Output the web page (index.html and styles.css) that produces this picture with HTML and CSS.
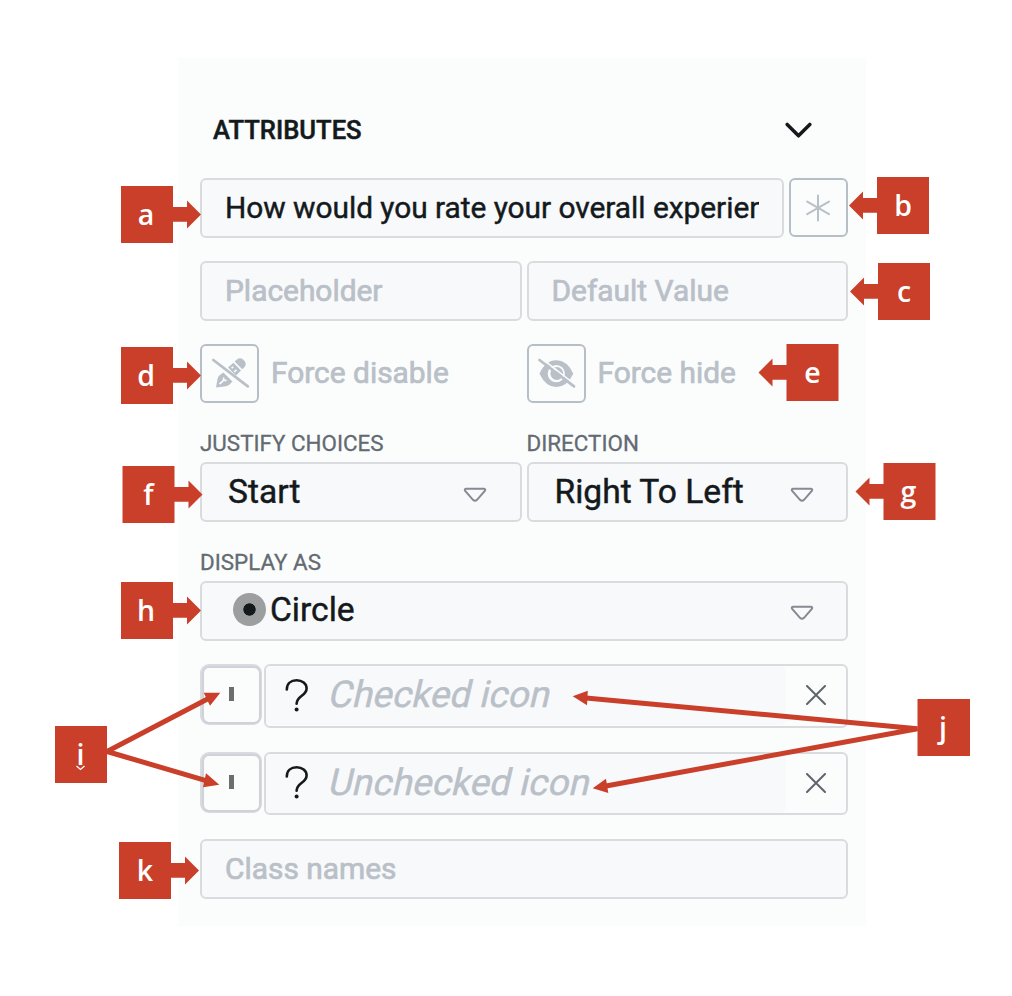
FILE: index.html
```html
<!DOCTYPE html>
<html lang="en">
<head>
<meta charset="utf-8">
<title>Attributes</title>
<link rel="stylesheet" href="styles.css">
</head>
<body>
<main class="panel">
  <header class="panel-head">
    <h1 class="title">ATTRIBUTES</h1>
    <svg class="chevron" width="28" height="18" viewBox="0 0 28 18"><path d="M2.2 3.4 13.5 14.8 24.8 3.4"/></svg>
  </header>

  <div class="row row-label">
    <div class="field grow"><span class="clip value">How would you rate your overall experience?</span></div>
    <button class="icon-btn"><svg width="59" height="60" viewBox="0 0 59 60"><path class="thin" d="M29 17.5v25M18.2 23.6l21.8 12.6M40 23.6 18.2 36.2"/></svg></button>
  </div>

  <div class="row row-pair">
    <div class="field half"><span class="hint">Placeholder</span></div>
    <div class="field half"><span class="hint">Default Value</span></div>
  </div>

  <div class="row row-toggles">
    <div class="toggle half">
      <button class="icon-btn"><svg width="59" height="59" viewBox="0 0 59 59">
        <path class="solid" d="M16 43.6 17.6 34.5Q18.2 31.8 20.2 30.8L23.4 28.6 32.4 37.6 29.6 40.4Q28.2 41.7 26 42.2Z"/>
        <path class="cut" d="M19.5 40.2 23.2 36.6M23.6 33.6V36.4H26.6"/>
        <path class="solid" d="M28 23.6 33.4 18.8 41 26.4 36 31.6Z"/>
        <path class="solid" d="M34.6 17.6 37 15.4Q40 13 43 15.4L44.6 17Q46.8 20 44.6 23L42.2 25.2Z"/>
        <path class="cut" d="M31.6 24.2 33.2 22.8M34.2 28 36.4 25.8"/>
        <path class="slash" d="M13.3 16 47.8 42.3"/>
      </svg></button>
      <span class="hint toggle-text">Force disable</span>
    </div>
    <div class="toggle half">
      <button class="icon-btn"><svg width="59" height="59" viewBox="0 0 59 59">
        <path class="solid" d="M12.5 29.7Q18.5 16.3 29.3 16.3T46.3 29.7Q39.8 43 29.3 43T12.5 29.7Z"/>
        <circle class="iris" cx="29.3" cy="29.7" r="8.6"/><circle class="solid" cx="29.8" cy="29.5" r="6.4"/>
        <circle class="iris" cx="27.6" cy="26.2" r="2"/>
        <path class="cut" d="M14.5 14.4 49 41.4"/><path class="slash" d="M12.5 16 47 42.3"/>
      </svg></button>
      <span class="hint toggle-text">Force hide</span>
    </div>
  </div>

  <div class="row row-selects">
    <div class="half">
      <div class="label">JUSTIFY CHOICES</div>
      <div class="field select"><span>Start</span><svg class="caret" width="24" height="16" viewBox="0 0 24 16"><path d="M3 1.8H21Q23 2.2 21.8 4L14 12.8Q12 14.8 10 12.8L2.2 4Q1 2.2 3 1.8Z"/></svg></div>
    </div>
    <div class="half">
      <div class="label">DIRECTION</div>
      <div class="field select"><span>Right To Left</span><svg class="caret" width="24" height="16" viewBox="0 0 24 16"><path d="M3 1.8H21Q23 2.2 21.8 4L14 12.8Q12 14.8 10 12.8L2.2 4Q1 2.2 3 1.8Z"/></svg></div>
    </div>
  </div>

  <div class="row-display">
    <div class="label">DISPLAY AS</div>
    <div class="field select display"><span class="choice"><i class="radio"></i><span>Circle</span></span><svg class="caret" width="24" height="16" viewBox="0 0 24 16"><path d="M3 1.8H21Q23 2.2 21.8 4L14 12.8Q12 14.8 10 12.8L2.2 4Q1 2.2 3 1.8Z"/></svg></div>
  </div>

  <div class="row row-icon">
    <div class="swatch"><div class="swatch-in"><i class="bar"></i></div></div>
    <div class="picker">
      <div class="picker-main"><svg class="question" width="26" height="36" viewBox="0 0 26 36"><path d="M2.8 11.5C2.8 5.5 7 2.2 12.6 2.2S22.6 5.7 22.6 10.5C22.6 18 12.6 17.6 12.6 25.8"/><circle cx="12.6" cy="31.6" r="2"/></svg><span class="slant">Checked icon</span></div>
      <svg class="close" width="20" height="20" viewBox="0 0 20 20"><path d="M1 1 19 19M19 1 1 19"/></svg>
    </div>
  </div>
  <div class="row row-icon">
    <div class="swatch"><div class="swatch-in"><i class="bar"></i></div></div>
    <div class="picker">
      <div class="picker-main"><svg class="question" width="26" height="36" viewBox="0 0 26 36"><path d="M2.8 11.5C2.8 5.5 7 2.2 12.6 2.2S22.6 5.7 22.6 10.5C22.6 18 12.6 17.6 12.6 25.8"/><circle cx="12.6" cy="31.6" r="2"/></svg><span class="slant">Unchecked icon</span></div>
      <svg class="close" width="20" height="20" viewBox="0 0 20 20"><path d="M1 1 19 19M19 1 1 19"/></svg>
    </div>
  </div>

  <div class="field"><span class="hint">Class names</span></div>
</main>

<svg class="callouts" width="1012" height="996" viewBox="0 0 1012 996">
  <defs>
    <path id="right" d="M0 0H52V21H66V14.5L80 28.5 66 42.5V35.8H52V57H0Z"/>
    <path id="left" d="M28 0H80V57H28V35.8H14V42.5L0 28.5 14 14.5V21H28Z"/>
  </defs>
  <use href="#right" x="121" y="186"/><use href="#left" x="849" y="177"/>
  <use href="#left" x="850" y="263"/><use href="#right" x="121" y="347"/>
  <use href="#left" x="758.5" y="344"/><use href="#right" x="122.5" y="466"/>
  <use href="#left" x="855.5" y="463"/><use href="#right" x="121" y="582"/>
  <use href="#right" x="119" y="842"/>
  <rect x="55" y="726" width="52" height="57"/><rect x="917.5" y="699" width="52.5" height="57"/>
  <path class="line" d="M208 698.8 107 751.5 206 780.6M586 698 917.5 728.7 606 786"/>
  <path d="M220.3 692.7 203.7 692.7 210 705.7ZM219.3 784.7 206 773.3 203 787.3ZM572.7 696.3 587.8 690.7 587 705.3ZM592.7 788.3 606 778.7 608.3 793Z"/>
  <g class="letters">
    <text x="146" y="225">a</text><text x="903" y="216">b</text><text x="904" y="302">c</text>
    <text x="146" y="386">d</text><text x="812.5" y="383">e</text><text x="148.5" y="505">f</text>
    <text x="908.5" y="502">g</text><text x="146" y="621">h</text><text x="80.5" y="765">i</text>
    <text x="943" y="738">j</text><text x="145" y="881">k</text>
  </g>
  <path class="tick" d="M76.5 766 80.5 769.5 84.5 766"/>
</svg>
</body>
</html>
```
FILE: styles.css
```css
* { box-sizing: border-box; }
body { margin: 0; width: 1012px; height: 996px; overflow: hidden; background: #fff; font-family: Roboto, sans-serif; color: #14191c; position: relative; }
.panel { margin: 58px 0 0 178px; width: 688px; height: 868px; padding: 0 18px 0 22px; background: #fbfdfd; }
.panel-head { height: 120px; padding: 24px 35px 0 13px; display: flex; align-items: center; justify-content: space-between; }
.title { margin: 0; font-size: 25.6px; font-weight: 500; -webkit-text-stroke: 0.5px; }
.chevron path { fill: none; stroke: #14191c; stroke-width: 3.5; stroke-linecap: round; stroke-linejoin: round; }
.row { display: flex; gap: 5px; }
.row-label { height: 60px; margin-bottom: 23px; }
.field { height: 60px; border: 2px solid #dadbdf; border-radius: 6px; background: #f8f9fb; padding: 0 23px 2px; display: flex; align-items: center; font-size: 29.9px; -webkit-text-stroke: 0.45px; }
.grow { flex: 1; min-width: 0; }
.half { flex: 1; min-width: 0; }
.clip { overflow: hidden; white-space: nowrap; width: 535px; }
.value { letter-spacing: -0.04px; }
.hint { color: #b9c0c7; -webkit-text-stroke: 0.7px; }
.row-pair .hint { padding-top: 1px; }
.icon-btn { width: 59px; height: 59px; flex: none; padding: 0; border: 2px solid #b6bec6; border-radius: 6px; background: #fbfdfd; display: flex; align-items: center; justify-content: center; }
.icon-btn svg { flex: none; }
.thin { fill: none; stroke: #b9c0c7; stroke-width: 2; stroke-linecap: round; }
.solid { fill: #b9c0c7; }
.slash { fill: none; stroke: #b9c0c7; stroke-width: 2.8; stroke-linecap: round; }
.cut { fill: none; stroke: #fbfdfd; stroke-width: 1.7; }
.iris { fill: #fbfdfd; }
.row-pair { height: 60px; margin-bottom: 23px; }
.row-toggles { height: 60px; margin-bottom: 25px; }
.toggle { display: flex; align-items: flex-start; gap: 12px; font-size: 29.9px; }
.toggle-text { line-height: 58px; }
.row-selects { height: 93px; margin-bottom: 26px; }
.row-display { height: 93px; margin-bottom: 23px; }
.label { height: 33px; line-height: 28px; font-size: 22.4px; color: #646a72; white-space: nowrap; -webkit-text-stroke: 0.3px; }
.select { font-size: 33.6px; padding: 0 32.5px 2px 26px; justify-content: space-between; }
.display { padding-left: 31px; padding-bottom: 4px; }
.caret { margin-top: 7px; }
.caret path { fill: none; stroke: #858b92; stroke-width: 2; }
.choice { display: flex; align-items: center; gap: 4px; }
.radio { width: 33px; height: 33px; border-radius: 50%; background: radial-gradient(circle, #14191c 5.8px, #9c9ea0 6.5px); }
.row-icon { height: 63.5px; margin-bottom: 24px; gap: 2px; }
.swatch { width: 62px; height: 61px; border: 2px solid #dadbdf; border-radius: 9px; background: #e3e5e9; }
.swatch-in { width: 59px; height: 58px; border: 2px solid #ced2d9; border-radius: 7px; background: #fbfdfd; display: flex; align-items: center; justify-content: center; }
.bar { width: 5px; height: 14px; margin-bottom: 2px; background: #6c6d6f; }
.picker { flex: 1; border: 2px solid #dadbdf; border-radius: 6px; display: flex; align-items: center; background: #fbfdfd; }
.picker-main { width: 520px; height: 59px; border-radius: 6px; background: #f8f9fb; padding: 0 0 2px 18px; display: flex; align-items: center; gap: 20px; font-size: 37px; color: #b9c0c7; }
.slant { transform: skewX(-13deg); -webkit-text-stroke: 0.4px; white-space: nowrap; }
.question { margin-top: 2px; }
.question path { fill: none; stroke: #14191c; stroke-width: 2.6; stroke-linecap: round; }
.question circle { fill: #14191c; }
.close { margin: 0 0 1px 20px; }
.close path { stroke: #5f656d; stroke-width: 2; stroke-linecap: round; }
.callouts { position: absolute; left: 0; top: 0; fill: #c93f2a; }
.line { fill: none; stroke: #c93f2a; stroke-width: 5; stroke-linejoin: bevel; }
.letters { fill: #fff; font-family: "Open Sans", sans-serif; font-size: 28.5px; font-weight: 600; text-anchor: middle; }
.tick { fill: none; stroke: #fff; stroke-width: 1.3; }
```
